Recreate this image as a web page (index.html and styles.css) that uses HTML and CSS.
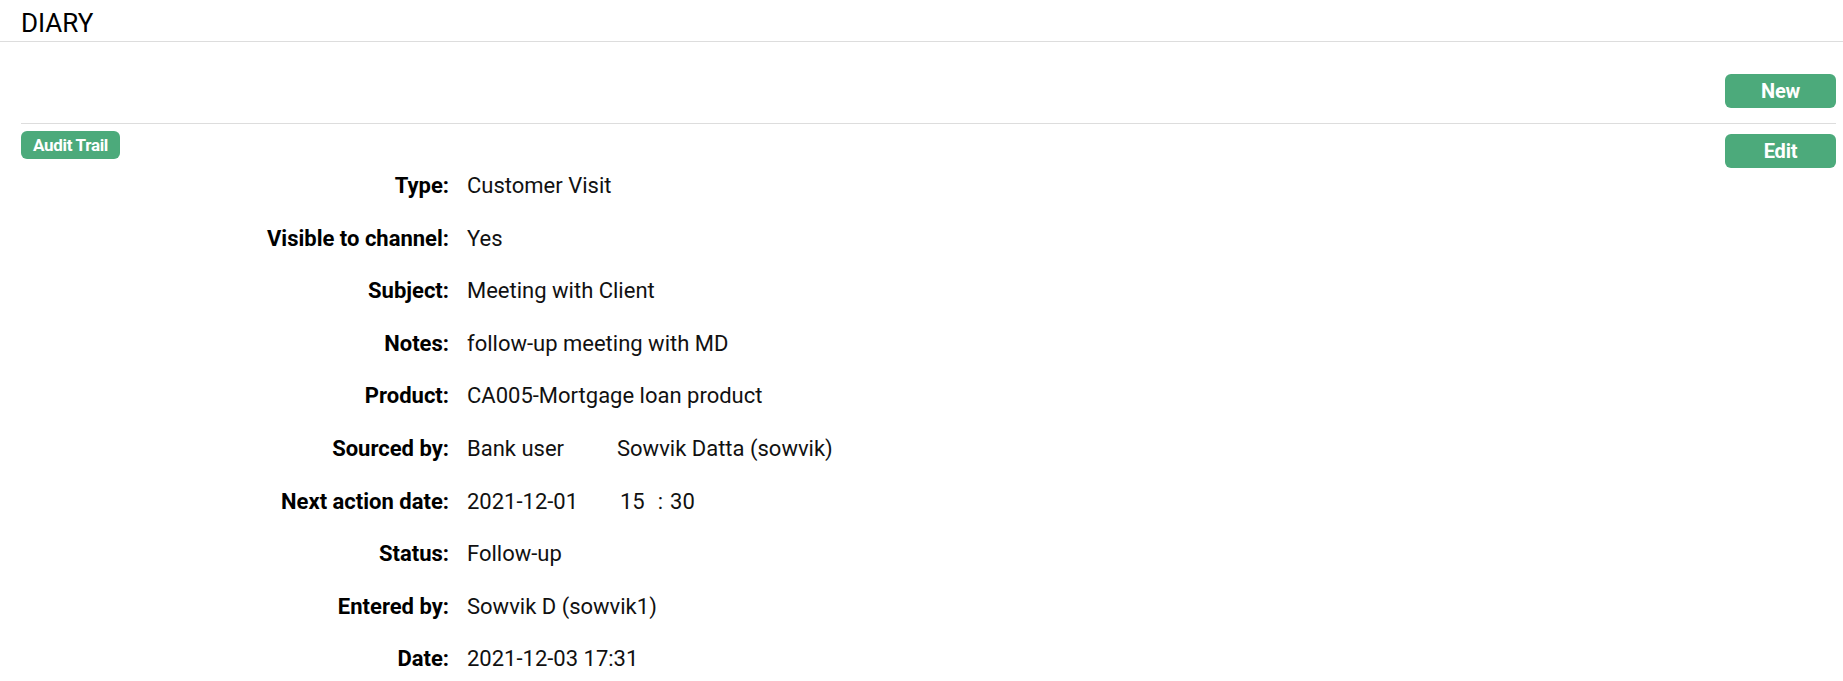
FILE: index.html
```html
<!DOCTYPE html>
<html lang="en">
<head>
<meta charset="utf-8">
<title>Diary</title>
<link rel="stylesheet" href="styles.css">
</head>
<body>
<header class="page-header">
  <h1 class="page-title">DIARY</h1>
</header>
<main class="content">
  <div class="toolbar">
    <button class="btn" type="button">New</button>
  </div>
  <div class="record-bar">
    <span class="badge">Audit Trail</span>
    <button class="btn btn-edit" type="button">Edit</button>
  </div>
  <dl class="details">
    <dt>Type:</dt><dd>Customer Visit</dd>
    <dt>Visible to channel:</dt><dd>Yes</dd>
    <dt>Subject:</dt><dd>Meeting with Client</dd>
    <dt>Notes:</dt><dd>follow-up meeting with MD</dd>
    <dt>Product:</dt><dd>CA005-Mortgage loan product</dd>
    <dt>Sourced by:</dt><dd><span class="src-type">Bank user</span><span>Sowvik Datta (sowvik)</span></dd>
    <dt>Next action date:</dt><dd><span class="date-part">2021-12-01</span><span>15</span><span class="time-sep">:</span><span>30</span></dd>
    <dt>Status:</dt><dd>Follow-up</dd>
    <dt>Entered by:</dt><dd>Sowvik D (sowvik1)</dd>
    <dt>Date:</dt><dd>2021-12-03 17:31</dd>
  </dl>
</main>
</body>
</html>
```
FILE: styles.css
```css
html, body {
  margin: 0;
  padding: 0;
  background: #ffffff;
}
body {
  font-family: Roboto, "Liberation Sans", Arial, sans-serif;
  color: #111111;
}
.page-header {
  padding: 8px 21px 3px;
  border-bottom: 1px solid #dddddd;
}
.page-title {
  margin: 0;
  font-size: 26px;
  font-weight: 400;
  line-height: 30px;
  height: 30px;
  color: #000000;
}
.content {
  padding: 0 7px 0 21px;
}
.toolbar {
  display: flex;
  justify-content: flex-end;
  padding: 32px 0 15px;
  border-bottom: 1px solid #dddddd;
}
.btn {
  width: 111px;
  height: 34px;
  padding: 0;
  border: none;
  border-radius: 6px;
  background: #4caa7b;
  color: #ffffff;
  font-family: Roboto, "Liberation Sans", Arial, sans-serif;
  font-size: 20px;
  font-weight: 700;
  letter-spacing: -0.2px;
  line-height: 34px;
  cursor: pointer;
}
.record-bar {
  display: flex;
  justify-content: space-between;
  align-items: flex-start;
  height: 36px;
}
.badge {
  margin-top: 7px;
  display: inline-flex;
  align-items: center;
  justify-content: center;
  width: 99px;
  height: 28px;
  border-radius: 6px;
  background: #4caa7b;
  color: #ffffff;
  font-size: 17px;
  font-weight: 700;
  letter-spacing: -0.3px;
}
.btn-edit {
  margin-top: 10px;
}
.details {
  display: grid;
  grid-template-columns: 428px 1fr;
  column-gap: 18px;
  margin: 0;
  font-size: 22px;
  line-height: 52.6px;
}
.details dt {
  text-align: right;
  font-weight: 700;
  letter-spacing: 0;
  color: #000000;
}
.details dd {
  margin: 0;
  white-space: nowrap;
}
.src-type {
  display: inline-block;
  width: 150px;
}
.date-part {
  display: inline-block;
  width: 153px;
}
.time-sep {
  margin: 0 7px 0 13px;
}
```
